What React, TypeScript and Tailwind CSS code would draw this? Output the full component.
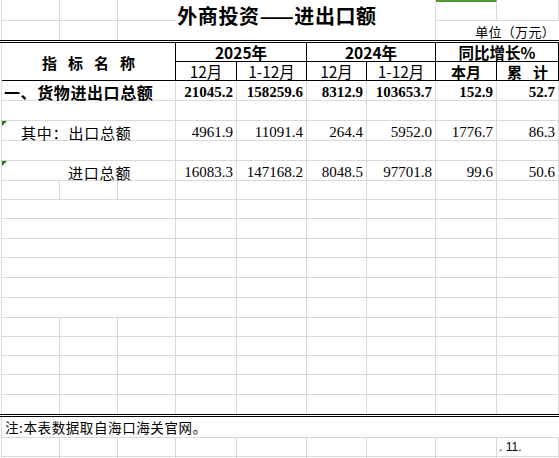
import React from "react";

const CJK = "font-['Noto_Sans_CJK_SC',sans-serif]";
const SERIF = "font-['Liberation_Serif','Noto_Sans_CJK_SC',serif]";
const G = "border-[#d9d9d9]";

function Blank({ noBottom, noRight }: { noBottom?: boolean; noRight?: boolean }) {
  const cls =
    noBottom && noRight
      ? ""
      : noBottom
      ? "border-r border-[#d9d9d9]"
      : noRight
      ? "border-b border-[#d9d9d9]"
      : "border-r border-b border-[#d9d9d9]";
  return <div className={cls} />;
}

function BlankRow({ noBottom }: { noBottom?: boolean }) {
  return (
    <>
      {Array.from({ length: 9 }).map((_, i) => (
        <Blank key={i} noBottom={noBottom} />
      ))}
    </>
  );
}

function MergedBlankRow() {
  return (
    <>
      <div className="col-span-3 border-r border-b border-[#d9d9d9]" />
      {Array.from({ length: 6 }).map((_, i) => (
        <Blank key={i} />
      ))}
    </>
  );
}

function Tri() {
  return (
    <span className="absolute left-0 top-0 h-0 w-0 border-t-[5px] border-r-[5px] border-t-[#1f7a1f] border-r-transparent" />
  );
}

function DataRow({
  label,
  values,
  bold,
  tri,
  indent,
}: {
  label: string;
  values: string[];
  bold?: boolean;
  tri?: boolean;
  indent: string;
}) {
  return (
    <>
      <div
        className={`relative col-span-3 flex items-end border-r border-b border-[#d9d9d9] ${indent}`}
      >
        {tri && <Tri />}
        <span
          className={`${CJK} whitespace-nowrap text-black ${
            bold
              ? "text-[16px] font-bold leading-[16px] tracking-[0.6px]"
              : "text-[15px] leading-[15px] tracking-[0.8px]"
          }`}
        >
          {label}
        </span>
      </div>
      {values.map((v, i) => (
        <div
          key={i}
          className="flex items-end justify-end border-r border-b border-[#d9d9d9] pr-[3px]"
        >
          <span
            className={`${SERIF} text-[15px] leading-[15px] text-black ${bold ? "font-bold" : ""}`}
          >
            {v}
          </span>
        </div>
      ))}
    </>
  );
}

export default function App() {
  return (
    <div className="h-[458px] w-[559px] overflow-hidden bg-white">
      <div
        className={`ml-px grid w-[558px] border-l ${G} grid-cols-[58px_58px_58px_61px_70px_60px_69px_61px_62px] grid-rows-[21px_19px_3px_19px_19px_20px_20px_20px_20px_20px_19px_19px_20px_19px_20px_20px_20px_19px_19px_19px_20px_19px_3px_21px_19px_20px]`}
      >
        {/* Row 1 */}
        <Blank />
        <Blank />
        <Blank noRight />
        <div className="col-span-4 row-span-2 flex items-start justify-center border-r border-[#d9d9d9] pt-[6px]">
          <span
            className={`${CJK} mr-[57px] whitespace-nowrap text-[20px] font-bold leading-[20px] tracking-[0.6px] text-black`}
          >
            外商投资——进出口额
          </span>
        </div>
        <div className="border-r border-b border-[#d9d9d9] border-t-2 border-t-[#4f9a35]" />
        <Blank />
        {/* Row 2 */}
        <Blank noBottom />
        <Blank noBottom />
        <Blank noBottom noRight />
        <div className="col-span-2 flex items-end justify-end pr-[4px] pb-[2px]">
          <span className={`${CJK} text-[13px] leading-[13px] tracking-[0.3px] text-black`}>
            单位（万元）
          </span>
        </div>
        {/* Row 3 double line */}
        <div className="col-span-9 -ml-[2px] -mr-px border-y border-black bg-white" />
        {/* Row 4-5 header */}
        <div className="col-span-3 row-span-2 flex items-center justify-center gap-[11px] border-r border-b border-black pt-[2px]">
          {["指", "标", "名", "称"].map((c) => (
            <span key={c} className={`${CJK} text-[15px] font-bold leading-[15px] text-black`}>
              {c}
            </span>
          ))}
        </div>
        <div className="col-span-2 flex items-center justify-center border-r border-b border-black">
          <span className={`${CJK} text-[15.5px] font-bold leading-[15px] text-black`}>2025年</span>
        </div>
        <div className="col-span-2 flex items-center justify-center border-r border-b border-black">
          <span className={`${CJK} text-[15.5px] font-bold leading-[15px] text-black`}>2024年</span>
        </div>
        <div className="col-span-2 flex items-center justify-center border-r border-b border-black">
          <span className={`${CJK} text-[15.5px] font-bold leading-[15px] text-black`}>同比增长%</span>
        </div>
        {["12月", "1-12月", "12月", "1-12月"].map((t, i) => (
          <div key={i} className="flex items-center justify-center border-r border-b border-black">
            <span className={`${CJK} text-[15.5px] leading-[15px] text-black`}>{t}</span>
          </div>
        ))}
        <div className="flex items-center justify-center border-r border-b border-black">
          <span className={`${CJK} text-[15px] font-bold leading-[15px] text-black`}>本月</span>
        </div>
        <div className="flex items-center justify-center gap-[11px] border-r border-b border-black">
          <span className={`${CJK} text-[15px] font-bold leading-[15px] text-black`}>累</span>
          <span className={`${CJK} text-[15px] font-bold leading-[15px] text-black`}>计</span>
        </div>
        {/* Data rows */}
        <DataRow
          label="一、货物进出口总额"
          bold
          indent="pl-[2px]"
          values={["21045.2", "158259.6", "8312.9", "103653.7", "152.9", "52.7"]}
        />
        <MergedBlankRow />
        <DataRow
          label="其中：出口总额"
          tri
          indent="pl-[19px]"
          values={["4961.9", "11091.4", "264.4", "5952.0", "1776.7", "86.3"]}
        />
        <MergedBlankRow />
        <DataRow
          label="进口总额"
          tri
          indent="pl-[66px]"
          values={["16083.3", "147168.2", "8048.5", "97701.8", "99.6", "50.6"]}
        />
        <BlankRow />
        <MergedBlankRow />
        <MergedBlankRow />
        <MergedBlankRow />
        <MergedBlankRow />
        <MergedBlankRow />
        <MergedBlankRow />
        <BlankRow />
        <BlankRow />
        <BlankRow />
        <BlankRow />
        <BlankRow noBottom />
        {/* double line */}
        <div className="col-span-9 -ml-[2px] -mr-px border-y border-black bg-white" />
        {/* note */}
        <div className="col-span-9 flex items-center border-b border-[#d9d9d9] pl-[3px]">
          <span
            className={`${CJK} whitespace-nowrap text-[13.5px] leading-[14px] tracking-[0.6px] text-black`}
          >
            注:本表数据取自海口海关官网。
          </span>
        </div>
        {/* row 25 */}
        <Blank />
        <Blank />
        <Blank />
        <Blank />
        <Blank />
        <Blank />
        <Blank />
        <Blank />
        <div className="flex items-center border-r border-b border-[#d9d9d9] pl-[2px]">
          <span className="font-['Liberation_Sans',sans-serif] text-[12px] leading-[12px] text-black">
            . 11.
          </span>
        </div>
        <BlankRow />
      </div>
    </div>
  );
}
